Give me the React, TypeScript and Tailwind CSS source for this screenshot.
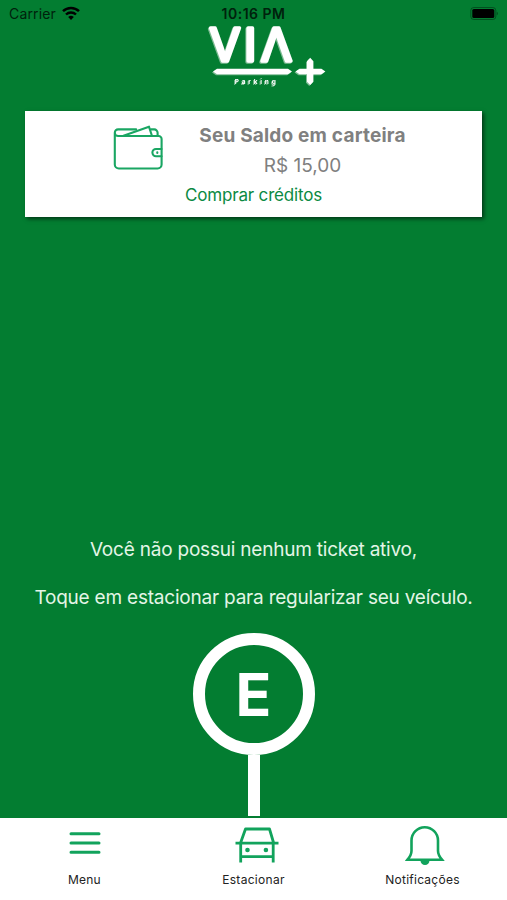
import type { ReactNode } from "react";

interface TabItemProps {
    label: string;
    labelClass: string;
    children: ReactNode;
}

function StatusBar() {
    return (
        <div className="grid h-6 grid-cols-3 items-center px-[9px] pt-[3px] text-black">
            <div className="flex items-center gap-[6px]">
                <span className="text-[14px] leading-none tracking-[0.15px] text-[#00210c]">Carrier</span>
                <svg width="18" height="15" viewBox="0 0 18 15" fill="none" stroke="currentColor">
                    <path d="M1 5.2a11.6 11.6 0 0 1 16 0" strokeWidth="2.5" />
                    <path d="M4 8.5a7.2 7.2 0 0 1 10 0" strokeWidth="2.4" />
                    <path d="M6.2 11.1a4.1 4.1 0 0 1 5.6 0L9 14z" fill="currentColor" stroke="none" />
                </svg>
            </div>
            <span className="text-center text-[14px] font-semibold leading-none tracking-[0.5px] whitespace-nowrap text-[#00210c]">
                10:16 PM
            </span>
            <svg className="justify-self-end" width="28" height="14" viewBox="0 0 28 14">
                <rect x="0.8" y="0.5" width="25" height="12" rx="3" fill="none" stroke="#000" strokeOpacity="0.35" />
                <rect x="2.3" y="2" width="22" height="9" rx="1.6" fill="#000" />
                <path d="M26.8 4.7c1.4.6 1.4 3 0 3.6z" fill="#000" fillOpacity="0.4" />
            </svg>
        </div>
    );
}

function Logo() {
    return (
        <svg
            className="ml-[204px] block overflow-visible drop-shadow-[-1px_1px_0_#7dbb93]"
            width="124"
            height="66"
            viewBox="204 24 124 66"
            fill="#fff"
            fontFamily="Inter, sans-serif"
        >
            <g fontSize="45" textAnchor="middle" stroke="#fff" strokeWidth="3.6" strokeLinejoin="round">
                <text x="225" y="60.7">V</text>
                <text x="250.3" y="60.7">I</text>
                <text x="276.5" y="60.7">Λ</text>
            </g>
            <path d="m213 71.5 4-2.8h71l4 2.8-4 2.8h-71z" />
            <path d="m295.500 71.500 4-2.800h7.500v-7.500l3.200-3.500 3.200 3.500v7.500h8l4 2.800-4 2.800h-8v7.500l-3.200 3.200-3.200-3.200v-7.500h-7.500z" />
            <text x="234.8" y="84.3" fontWeight="700" fontSize="6.5" textLength="41">
                Parking
            </text>
        </svg>
    );
}

function WalletIcon() {
    return (
        <svg
            width="50"
            height="46"
            viewBox="0 0 50 46"
            fill="none"
            stroke="#1aa663"
            strokeWidth="2.1"
            strokeLinejoin="round"
            strokeLinecap="round"
        >
            <path d="M1.800 7.700v31.800a4 4 0 0 0 4 4h38.800a4 4 0 0 0 4-4V14a3 3 0 0 0-3-3H5.100a3.300 3.300 0 0 1 0-6.600h18" />
            <path d="m10.500 10.700 25.500-9L39 11" />
            <path d="M38 4.400h3.200a3.400 3.400 0 0 1 3.400 3.400V11" />
            <path d="M48.500 24h-5.500a3.600 3.600 0 0 0 0 7.200h5.500" />
            <path d="M44.300 27.300v.6" />
        </svg>
    );
}

function WalletCard() {
    return (
        <section className="mx-[25px] mt-[21px] h-[106px] bg-white shadow-[2px_2px_4px_rgba(0,0,0,0.55)]">
            <div className="flex h-[70px] pl-[88px] pt-[14px]">
                <WalletIcon />
                <div className="ml-9 w-[207px] text-center text-[#808080]">
                    <h1 className="text-[19px] leading-[22px] font-bold tracking-[0.2px] whitespace-nowrap">
                        Seu Saldo em carteira
                    </h1>
                    <p className="mt-2 text-[19px] leading-[22px] whitespace-nowrap">R$ 15,00</p>
                </div>
            </div>
            <button className="mx-auto block pt-[3px] text-[17px] leading-[22px] tracking-[-0.17px] text-[#0b8a43]">
                Comprar créditos
            </button>
        </section>
    );
}

function ParkingSign() {
    return (
        <button className="mx-auto mt-[23px] flex flex-col items-center">
            <span className="flex size-[122px] items-center justify-center rounded-full border-[12px] border-white text-[59px] font-bold leading-none tracking-normal text-white">
                E
            </span>
            <span className="h-[61px] w-[12px] bg-white" />
        </button>
    );
}

function TabItem({ label, labelClass, children }: TabItemProps) {
    return (
        <button className="flex flex-1 flex-col items-center pt-[6px] text-[#222]">
            <span className="flex h-[42px] items-start justify-center">{children}</span>
            <span className={`mt-[6px] text-[12px] leading-4 ${labelClass}`}>{label}</span>
        </button>
    );
}

function TabBar() {
    return (
        <nav className="flex h-[82px] bg-white">
            <TabItem label="Menu" labelClass="tracking-[0.2px]">
                <svg width="32" height="40" viewBox="0 0 32 40" stroke="#12a35c" strokeWidth="3" strokeLinecap="round">
                    <path d="M2 9.800h28M2 19h28M2 28.200h28" />
                </svg>
            </TabItem>
            <TabItem label="Estacionar" labelClass="tracking-[0.3px]">
                <svg className="ml-1.5" width="46" height="40" viewBox="0 0 46 40" fill="none" stroke="#12a35c" strokeWidth="2.8">
                    <path d="M6.700 18.500 11.500 5h24l4 13.500M1.500 19.200h43" strokeLinejoin="round" />
                    <path d="M6.700 18v20.500M39.200 18v20.500M6.700 32.700h32.500" />
                    <circle cx="13.500" cy="26" r="2.300" fill="#12a35c" stroke="none" />
                    <circle cx="31.900" cy="26" r="2.300" fill="#12a35c" stroke="none" />
                </svg>
            </TabItem>
            <TabItem label="Notificações" labelClass="tracking-[0.25px]">
                <svg className="ml-1" width="40" height="42" viewBox="0 0 40 42" fill="none" stroke="#12a35c" strokeWidth="2.6">
                    <path d="M2.500 35.700c2.500-3 4-5.500 4-9V16.500a13 13 0 0 1 26.500 0v10.200c0 3.500 1.500 6 4 9z" />
                    <path d="M15.500 36.500a4.500 4.500 0 0 0 9 0z" fill="#12a35c" stroke="none" />
                </svg>
            </TabItem>
        </nav>
    );
}

export default function App() {
    return (
        <div className="flex h-[900px] w-[507px] flex-col overflow-hidden bg-[#037d31] font-['Inter',sans-serif]">
            <StatusBar />
            <Logo />
            <WalletCard />
            <main className="mt-auto pb-[2px] text-center text-[19px] leading-6 tracking-[-0.21px] text-[#e4f5e6]">
                <p>Você não possui nenhum ticket ativo,</p>
                <p className="mt-6">Toque em estacionar para regularizar seu veículo.</p>
                <ParkingSign />
            </main>
            <TabBar />
        </div>
    );
}
